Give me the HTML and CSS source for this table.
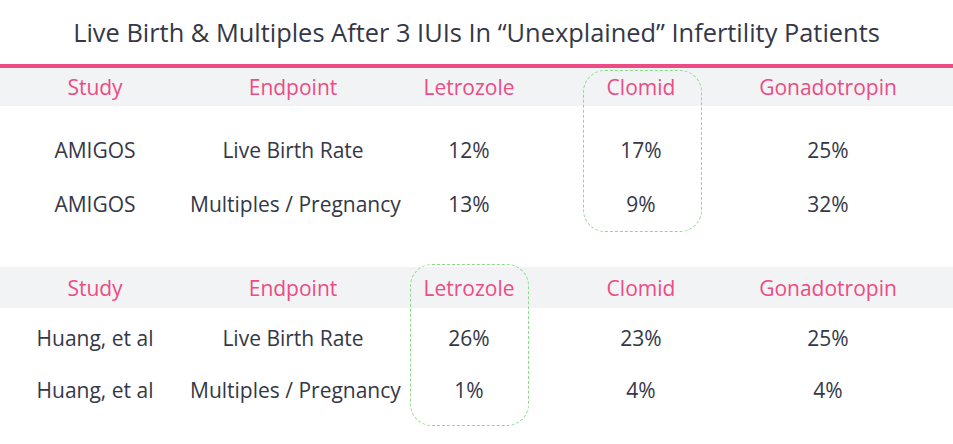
FILE: index.html
```html
<!DOCTYPE html>
<html>
<head>
<meta charset="utf-8">
<link rel="stylesheet" href="styles.css">
</head>
<body>
<h1 class="title">Live Birth &amp; Multiples After 3 IUIs In “Unexplained” Infertility Patients</h1>
<div class="rule"></div>
<section class="tbl tbl-a">
  <div class="row head">
    <div>Study</div><div>Endpoint</div><div>Letrozole</div><div>Clomid</div><div>Gonadotropin</div>
  </div>
  <div class="row r1">
    <div>AMIGOS</div><div>Live Birth Rate</div><div>12%</div><div>17%</div><div>25%</div>
  </div>
  <div class="row r2">
    <div>AMIGOS</div><div>Multiples / Pregnancy</div><div>13%</div><div>9%</div><div>32%</div>
  </div>
  <div class="hl hl-clomid"></div>
</section>
<section class="tbl tbl-b">
  <div class="row head">
    <div>Study</div><div>Endpoint</div><div>Letrozole</div><div>Clomid</div><div>Gonadotropin</div>
  </div>
  <div class="row r1">
    <div>Huang, et al</div><div>Live Birth Rate</div><div>26%</div><div>23%</div><div>25%</div>
  </div>
  <div class="row r2">
    <div>Huang, et al</div><div>Multiples / Pregnancy</div><div>1%</div><div>4%</div><div>4%</div>
  </div>
  <div class="hl hl-letrozole"></div>
</section>
</body>
</html>
```
FILE: styles.css
```css
html, body {
  margin: 0;
  padding: 0;
  background: #ffffff;
}
body {
  width: 953px;
  height: 444px;
  overflow: hidden;
  font-family: "Open Sans", "Liberation Sans", sans-serif;
  color: #343747;
}
.title {
  margin: 0;
  height: 64px;
  box-sizing: border-box;
  padding-top: 17px;
  font-size: 25.4px;
  font-weight: 400;
  line-height: 30px;
  text-align: center;
  color: #343747;
  white-space: nowrap;
}
.rule {
  height: 4px;
  background: #ec4b84;
}
.tbl {
  position: relative;
}
.row {
  display: grid;
  grid-template-columns: 190px 206px 146px 198px 176px 1fr;
  align-items: center;
  font-size: 21px;
  line-height: 26px;
}
.row > div {
  text-align: center;
  white-space: nowrap;
}
.head {
  background: #f2f3f5;
  color: #ec4b84;
}
.tbl-a .head {
  height: 38px;
}
.tbl-a .r1 {
  margin-top: 18px;
  height: 52px;
}
.tbl-a .r2 {
  margin-top: 2px;
  height: 52px;
}
.tbl-b {
  margin-top: 37px;
}
.tbl-b .head {
  height: 41px;
}
.tbl-b .r1 {
  margin-top: 4px;
  height: 52px;
}
.tbl-b .r2 {
  height: 52px;
}
.hl {
  position: absolute;
  width: 119px;
  height: 162px;
  box-sizing: border-box;
  border: 1.2px dashed #8ddb88;
  border-radius: 22px;
}
.hl-clomid {
  left: 583px;
  top: 2px;
}
.hl-letrozole {
  left: 410px;
  top: -3px;
}
```
